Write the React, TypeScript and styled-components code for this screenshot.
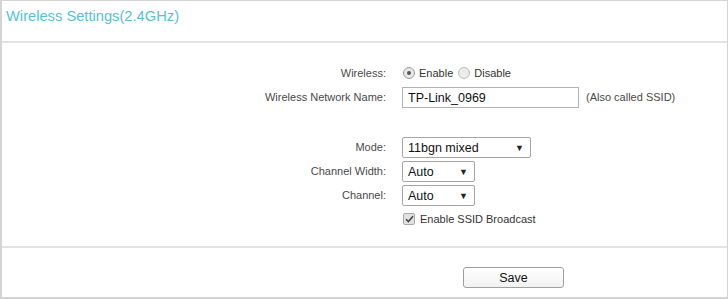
import React from "react";
import styled, { createGlobalStyle } from "styled-components";

const Global = createGlobalStyle`
  html, body { margin: 0; padding: 0; background: #fff; }
  body { font-family: "Liberation Sans", Arial, sans-serif; }
`;

const Panel = styled.div`
  box-sizing: border-box;
  width: 728px;
  height: 299px;
  border: 1px solid #d4d4d4;
  border-left-width: 2px;
  border-bottom-width: 2px;
  display: flex;
  flex-direction: column;
`;

const Header = styled.div`
  height: 42px;
  border-bottom: 2px solid #e3e3e3;
  padding: 7px 0 0 4px;
  box-sizing: border-box;
  font-size: 14.7px;
  color: #56c2d3;
`;

const Form = styled.div`
  padding: 18px 0 15px 0;
  display: flex;
  flex-direction: column;
`;

const Row = styled.div<{ $gap?: number }>`
  display: grid;
  grid-template-columns: 384px 1fr;
  column-gap: 16px;
  height: 24px;
  align-items: center;
  margin-top: ${(p) => p.$gap ?? 0}px;
`;

const Label = styled.div`
  text-align: right;
  font-size: 11px;
  color: #4a4a4a;
`;

const Controls = styled.div`
  display: flex;
  align-items: center;
  font-size: 11px;
  color: #333;
`;

const RadioDot = styled.span<{ $on?: boolean }>`
  box-sizing: border-box;
  width: 12px;
  height: 12px;
  border-radius: 50%;
  border: 1px solid ${(p) => (p.$on ? "#9a9a9a" : "#bdbdbd")};
  background: ${(p) => (p.$on ? "#e8e8e8" : "#ececec")};
  display: inline-flex;
  align-items: center;
  justify-content: center;
  margin: 0 4px 0 1px;
  &::after {
    content: "";
    width: 4px;
    height: 4px;
    border-radius: 50%;
    background: ${(p) => (p.$on ? "#555" : "transparent")};
  }
`;

const Option = styled.span`
  display: inline-flex;
  align-items: center;
  margin-right: 4px;
`;

const TextInput = styled.div`
  box-sizing: border-box;
  width: 177px;
  height: 21px;
  border: 1px solid #b4b4b4;
  padding: 1px 0 0 5px;
  display: flex;
  align-items: center;
  font-size: 12.5px;
  color: #111;
`;

const Hint = styled.span`
  margin-left: 7px;
  font-size: 11px;
  color: #4a4a4a;
`;

const Select = styled.div<{ $w: number }>`
  box-sizing: border-box;
  width: ${(p) => p.$w}px;
  height: 21px;
  border: 1px solid #a6a6a6;
  border-radius: 2px;
  padding: 1px 6px 0 5px;
  display: flex;
  align-items: center;
  justify-content: space-between;
  font-size: 12.5px;
  color: #111;
`;

const Arrow = styled.span`
  font-size: 9px;
  color: #222;
`;

const Check = styled.span`
  box-sizing: border-box;
  width: 12px;
  height: 12px;
  border: 1px solid #a8a8a8;
  border-radius: 2px;
  background: #e2e2e2;
  display: inline-flex;
  align-items: center;
  justify-content: center;
  margin: 0 5px 0 1px;
`;

const Footer = styled.div`
  flex: 1;
  border-top: 2px solid #e3e3e3;
  padding: 19px 0 0 461px;
  box-sizing: border-box;
`;

const Button = styled.button`
  box-sizing: border-box;
  width: 101px;
  height: 21px;
  border: 1px solid #a0a0a0;
  border-radius: 3px;
  background: linear-gradient(#ffffff, #f2f2f2);
  font-family: "Liberation Sans", Arial, sans-serif;
  font-size: 12.5px;
  color: #111;
  padding: 0;
`;

export default function App() {
  return (
    <>
      <Global />
      <Panel>
        <Header>Wireless Settings(2.4GHz)</Header>
        <Form>
          <Row>
            <Label>Wireless:</Label>
            <Controls>
              <Option>
                <RadioDot $on />
                Enable
              </Option>
              <Option>
                <RadioDot />
                Disable
              </Option>
            </Controls>
          </Row>
          <Row>
            <Label>Wireless Network Name:</Label>
            <Controls>
              <TextInput>TP-Link_0969</TextInput>
              <Hint>(Also called SSID)</Hint>
            </Controls>
          </Row>
          <Row $gap={26}>
            <Label>Mode:</Label>
            <Controls>
              <Select $w={129}>
                11bgn mixed<Arrow>▼</Arrow>
              </Select>
            </Controls>
          </Row>
          <Row>
            <Label>Channel Width:</Label>
            <Controls>
              <Select $w={73}>
                Auto<Arrow>▼</Arrow>
              </Select>
            </Controls>
          </Row>
          <Row>
            <Label>Channel:</Label>
            <Controls>
              <Select $w={73}>
                Auto<Arrow>▼</Arrow>
              </Select>
            </Controls>
          </Row>
          <Row>
            <Label />
            <Controls>
              <Check>
                <svg width="9" height="8" viewBox="0 0 9 8">
                  <path d="M1 4.2 L3.4 6.6 L8 1.2" fill="none" stroke="#444" strokeWidth="1.6" />
                </svg>
              </Check>
              Enable SSID Broadcast
            </Controls>
          </Row>
        </Form>
        <Footer>
          <Button>Save</Button>
        </Footer>
      </Panel>
    </>
  );
}
